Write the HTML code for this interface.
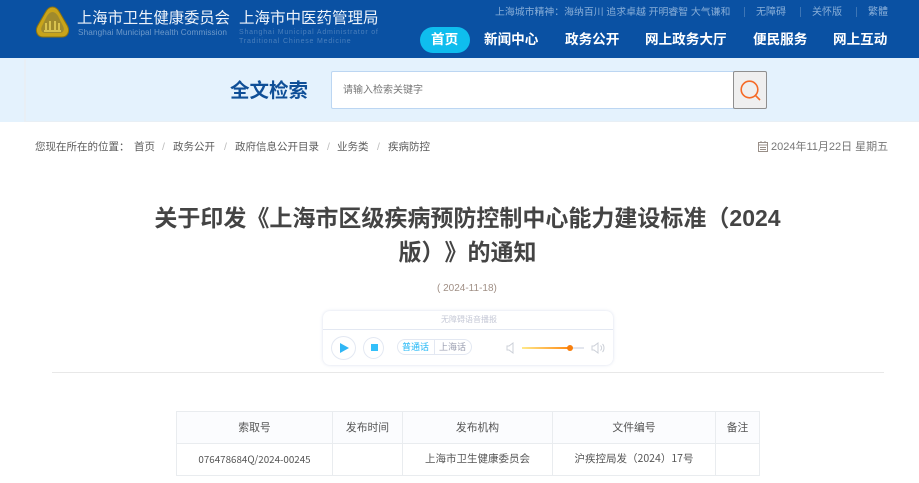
<!DOCTYPE html>
<html><head><meta charset="utf-8">
<style>
*{margin:0;padding:0;box-sizing:border-box}
html,body{width:919px;height:483px;overflow:hidden;background:#fff}
body{position:relative;font-family:"Liberation Sans","Noto Sans CJK SC",sans-serif;color:#555;text-spacing-trim:space-all}
.a{position:absolute;white-space:nowrap}
.nav{top:32px;font-size:13.6px;font-weight:700;color:#fff;line-height:16px}
.bc{top:140px;font-size:10.5px;line-height:14px;color:#5c5c5c}
.sl{top:140px;font-size:10.5px;line-height:14px;color:#bbb}
.td{position:absolute;border:1px solid #e9ecef;text-align:center;font-family:"WenQuanYi Zen Hei","Noto Sans CJK SC",sans-serif;font-size:10.5px;color:#555;white-space:nowrap}
.th{background:#fbfcfe;top:411px;height:33px;line-height:30px;font-size:10.8px}
.tr{top:443px;height:33px;line-height:30px}
</style></head><body>
<div class="a" style="left:0;top:0;width:919px;height:58px;background:#0a51a3"></div>
<svg class="a" style="left:35px;top:6px" width="35" height="32" viewBox="0 0 35 32">
<path d="M17.500 1C21 1 23 3 25 7L32.500 20C35 25 33 31 27 31L8 31C2 31 0 25 2.500 20L10 7C12 3 14 1 17.500 1Z" fill="#c9a41a" stroke="#8d7410"/>
<path d="M17.500 6C20 6 21.500 8 23 10L28 20C30 24 28 27 25 27L10 27C7 27 5 24 7 20L12 10C13.500 8 15 6 17.500 6Z" fill="#a08a2c"/>
<path d="M11 25V17M15 25V15M20 25V15M24 25V17M9 25H26" stroke="#d9c24e" stroke-width="2"/>
</svg>
<div class="a" style="left:77px;top:9px;font-size:15.300px;line-height:20px;color:#eef3fa">上海市卫生健康委员会</div>
<div class="a" style="left:239px;top:9px;font-size:15.500px;line-height:20px;color:#eef3fa">上海市中医药管理局</div>
<div class="a" style="left:78px;top:27.500px;font-size:8.200px;line-height:10px;color:#6f9aca;letter-spacing:.12px">Shanghai Municipal Health Commission</div>
<div class="a" style="left:239px;top:29px;font-size:7px;line-height:8.500px;color:#4a7fbc;letter-spacing:.8px">Shanghai Municipal Administrator of<br>Traditional Chinese Medicine</div>
<div class="a" style="left:495px;top:6px;font-size:9.900px;line-height:14px;color:#88aed8">上海城市精神：海纳百川 追求卓越 开明睿智 大气谦和</div>
<div class="a" style="left:744px;top:7px;width:1px;height:10px;background:#3d75b5"></div>
<div class="a" style="left:756px;top:6px;font-size:10px;line-height:14px;color:#88aed8">无障碍</div>
<div class="a" style="left:800px;top:7px;width:1px;height:10px;background:#3d75b5"></div>
<div class="a" style="left:812px;top:6px;font-size:10px;line-height:14px;color:#88aed8">关怀版</div>
<div class="a" style="left:856px;top:7px;width:1px;height:10px;background:#3d75b5"></div>
<div class="a" style="left:868px;top:6px;font-size:10px;line-height:14px;color:#88aed8">繁體</div>
<div class="a" style="left:420px;top:27px;width:50px;height:26px;border-radius:13px;background:#0fbdee"></div>
<div class="a nav" style="left:431px">首页</div>
<div class="a nav" style="left:484px">新闻中心</div>
<div class="a nav" style="left:565px">政务公开</div>
<div class="a nav" style="left:645px">网上政务大厅</div>
<div class="a nav" style="left:753px">便民服务</div>
<div class="a nav" style="left:833px">网上互动</div>

<div class="a" style="left:0;top:58px;width:919px;height:64px;background:#e4f2fd"></div>
<div class="a" style="left:24px;top:59px;width:895px;height:63px;border-left:2px solid #e8eff5;border-bottom:1px solid #e8eff5"></div>
<div class="a" style="left:230px;top:79px;font-size:19.500px;line-height:24px;font-weight:700;color:#0f4f97">全文检索</div>
<div class="a" style="left:331px;top:71px;width:403px;height:38px;background:#fff;border:1px solid #bcd6f2;border-radius:2px 0 0 2px"></div>
<div class="a" style="left:343px;top:84px;font-size:10px;line-height:14px;color:#777">请输入检索关键字</div>
<div class="a" style="left:733px;top:71px;width:34px;height:38px;background:#efefef;border:1px solid #8f8f8f;border-radius:2px"></div>
<svg class="a" style="left:739px;top:79px" width="23" height="23" viewBox="0 0 23 23" fill="none" stroke="#f56a27" stroke-width="1.600"><circle cx="10.500" cy="10.500" r="8.300"/><path d="M16.500 16.500L21 21"/></svg>

<div class="a bc" style="left:35px">您现在所在的位置：</div>
<div class="a bc" style="left:134px">首页</div><div class="a sl" style="left:162px">/</div>
<div class="a bc" style="left:173px">政务公开</div><div class="a sl" style="left:224px">/</div>
<div class="a bc" style="left:235px">政府信息公开目录</div><div class="a sl" style="left:327px">/</div>
<div class="a bc" style="left:337px">业务类</div><div class="a sl" style="left:377px">/</div>
<div class="a bc" style="left:388px">疾病防控</div>
<svg class="a" style="left:758px;top:141px" width="10" height="11" viewBox="0 0 10 11" fill="none" stroke="#998f88"><rect x=".5" y="1.500" width="9" height="9"/><path d="M.5 4H9.500M3 0V2M7 0V2M2 6.500H8M2 8.500H8"/></svg>
<div class="a" style="left:771px;top:140px;font-size:11px;line-height:14px;color:#777">2024年11月22日 星期五</div>

<div class="a" style="left:0;top:201px;width:935px;text-align:center;font-size:23px;line-height:34px;font-weight:700;color:#444;white-space:normal">关于印发《上海市区级疾病预防控制中心能力建设标准（2024<br>版）》的通知</div>
<div class="a" style="left:437px;top:282px;font-size:10px;line-height:13px;color:#a08f85">( 2024-11-18)</div>

<div class="a" style="left:323px;top:311px;width:290px;height:54px;background:#fff;border-radius:7px;box-shadow:0 0 3px rgba(120,140,190,.28)"></div>
<div class="a" style="left:323px;top:329px;width:290px;height:1px;background:#e3e8f2"></div>
<div class="a" style="left:441px;top:314px;font-size:8px;line-height:12px;color:#c5c8d6">无障碍语音播报</div>
<div class="a" style="left:331px;top:336px;width:25px;height:24px;border:1px solid #e3e8f2;border-radius:50%"></div>
<svg class="a" style="left:339px;top:342px" width="11" height="12"><path d="M1 1L10 6L1 11Z" fill="#2fb6f5"/></svg>
<div class="a" style="left:363px;top:337px;width:21px;height:22px;border:1px solid #e3e8f2;border-radius:50%"></div>
<div class="a" style="left:371px;top:344px;width:7px;height:7px;background:#33c0fa"></div>
<div class="a" style="left:397px;top:339px;width:75px;height:16px;border:1px solid #e3e8f2;border-radius:8px"></div>
<div class="a" style="left:434px;top:339px;width:1px;height:16px;background:#e3e8f2"></div>
<div class="a" style="left:402px;top:340px;font-size:9px;line-height:14px;color:#1eb6f5">普通话</div>
<div class="a" style="left:439px;top:340px;font-size:9px;line-height:14px;color:#9a9eb0">上海话</div>
<svg class="a" style="left:506px;top:342px" width="9" height="12" fill="none" stroke="#ccd0d8"><path d="M1 4H3L7 1V11L3 8H1Z"/></svg>
<div class="a" style="left:522px;top:347px;width:62px;height:2px;background:#e3e6ee"></div>
<div class="a" style="left:522px;top:347px;width:48px;height:2px;background:linear-gradient(90deg,#ffe98a,#ff8a14)"></div>
<div class="a" style="left:567px;top:345px;width:6px;height:6px;border-radius:50%;background:#f87f0d"></div>
<svg class="a" style="left:591px;top:342px" width="14" height="12" fill="none" stroke="#ccd0d8"><path d="M1 4H3L7 1V11L3 8H1Z"/><path d="M9.500 3.500C11 5 11 7 9.500 8.500M11.500 2C13.500 4 13.500 8 11.500 10"/></svg>
<div class="a" style="left:52px;top:372px;width:832px;height:1px;background:#e8e8e8"></div>

<div class="td th" style="left:176px;width:157px">索取号</div>
<div class="td th" style="left:332px;width:71px">发布时间</div>
<div class="td th" style="left:402px;width:151px">发布机构</div>
<div class="td th" style="left:552px;width:164px">文件编号</div>
<div class="td th" style="left:715px;width:45px">备注</div>
<div class="td tr" style="left:176px;width:157px;font-size:9.800px">076478684Q/2024-00245</div>
<div class="td tr" style="left:332px;width:71px"></div>
<div class="td tr" style="left:402px;width:151px">上海市卫生健康委员会</div>
<div class="td tr" style="left:552px;width:164px">沪疾控局发（2024）17号</div>
<div class="td tr" style="left:715px;width:45px"></div>
</body></html>
